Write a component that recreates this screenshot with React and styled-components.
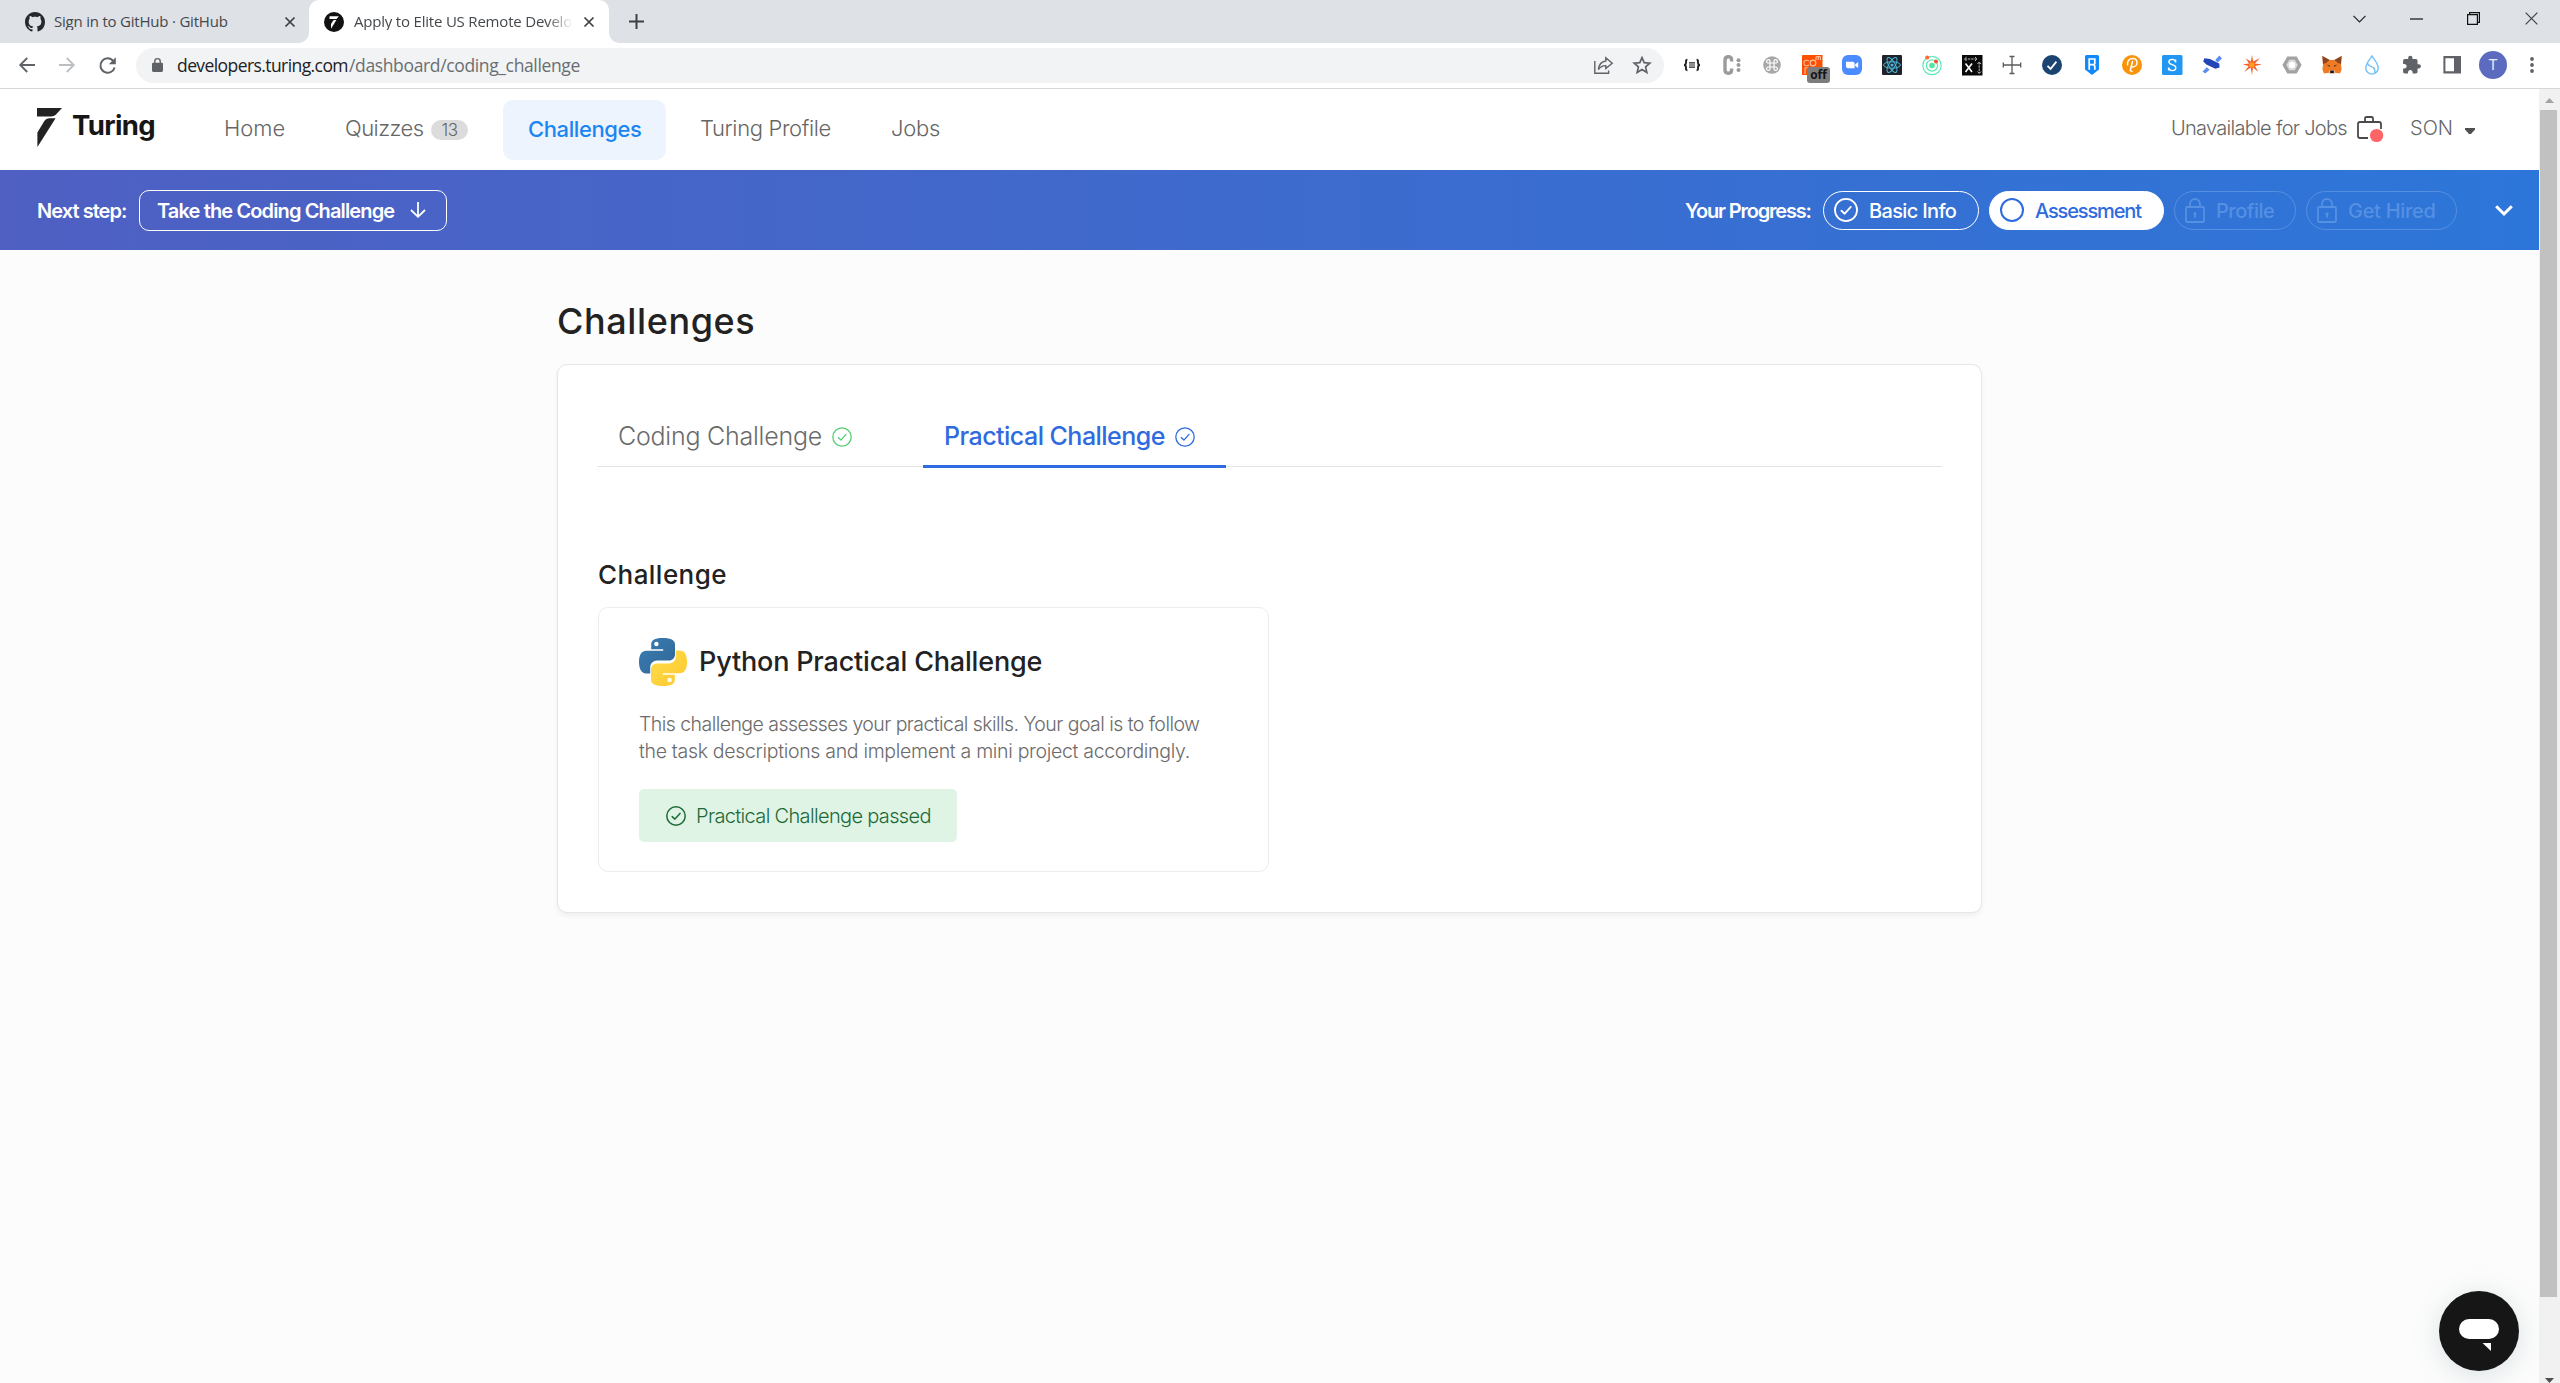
import React from "react";
import styled, { createGlobalStyle, css } from "styled-components";

const GlobalStyle = createGlobalStyle`
  *, *::before, *::after { box-sizing: border-box; }
  html, body { margin: 0; padding: 0; }
  body { font-family: Inter, "Liberation Sans", sans-serif; background: #fcfcfc; overflow: hidden; }
`;

/* ---------- shared ---------- */

const Window = styled.div`
  display: flex;
  flex-direction: column;
  width: 2560px;
  height: 1383px;
  overflow: hidden;
`;

const Label = styled.span`
  flex: none;
  display: block;
  width: ${(p) => (p.$w ? `${p.$w}px` : "auto")};
  margin: ${(p) => p.$mt || 0}px 0 0 ${(p) => p.$ml || 0}px;
  font-size: ${(p) => p.$size}px;
  font-weight: ${(p) => p.$weight || 400};
  letter-spacing: ${(p) => p.$ls || 0}px;
  line-height: 1.2;
  color: ${(p) => p.$color || "inherit"};
  white-space: nowrap;
`;

const ChromeLabel = styled(Label)`
  font-family: "Open Sans", "Noto Sans", sans-serif;
`;

const Icon = styled.svg`
  flex: none;
  display: block;
  width: ${(p) => p.$w}px;
  height: ${(p) => p.$h || p.$w}px;
  margin: ${(p) => p.$mt || 0}px 0 0 ${(p) => p.$ml || 0}px;
  overflow: visible;
`;

const Spacer = styled.div`
  flex: 1;
`;

/* ---------- browser chrome ---------- */

const TabStrip = styled.div`
  flex: none;
  display: flex;
  height: 43px;
  background: #dee1e6;
`;

const Tab = styled.div`
  position: relative;
  display: flex;
  align-items: center;
  height: 43px;
  ${(p) =>
    p.$active
      ? css`
          width: 300px;
          padding-left: 15px;
          background: #fff;
          border-radius: 10px 10px 0 0;
          &::before,
          &::after {
            content: "";
            position: absolute;
            bottom: 0;
            width: 10px;
            height: 10px;
          }
          &::before {
            left: -10px;
            background: radial-gradient(circle at 0 0, transparent 9.5px, #fff 10px);
          }
          &::after {
            right: -10px;
            background: radial-gradient(circle at 100% 0, transparent 9.5px, #fff 10px);
          }
        `
      : css`
          width: 309px;
          padding-left: 25px;
        `}
`;

const TabTitle = styled(ChromeLabel)`
  overflow: hidden;
  ${(p) =>
    p.$fade &&
    css`
      mask-image: linear-gradient(to right, #000 88%, transparent);
    `}
`;

const WindowControls = styled.div`
  display: flex;
  align-items: center;
  height: 37px;
  padding-right: 22px;
`;

const Toolbar = styled.div`
  flex: none;
  display: flex;
  align-items: center;
  height: 46px;
  padding: 0 20px 1px 19px;
  background: #fff;
  border-bottom: 1px solid #d5d8db;
`;

const Omnibox = styled.div`
  flex: none;
  display: flex;
  align-items: center;
  width: 1528px;
  height: 35px;
  margin-left: 20px;
  padding: 0 13px 0 16px;
  border-radius: 18px;
  background: #f1f3f4;
`;

const Extensions = styled.div`
  display: flex;
  align-items: center;
  gap: 20px;
  margin-left: 18px;
`;

const ExtSlot = styled.div`
  position: relative;
  flex: none;
  width: 20px;
  height: 20px;
`;

const OffBadge = styled.span`
  position: absolute;
  left: 5px;
  top: 12px;
  width: 23px;
  height: 16px;
  border-radius: 3px;
  background: #7d7d7d;
  color: #151515;
  font: 700 12px/16px "Open Sans", sans-serif;
  text-align: center;
`;

const Avatar = styled.div`
  flex: none;
  width: 28px;
  height: 28px;
  margin-left: 17px;
  border-radius: 50%;
  background: #5c6bc0;
  color: #e8eaf6;
  font: 400 15px/28px Roboto, sans-serif;
  text-align: center;
`;

/* ---------- page ---------- */

const Viewport = styled.div`
  display: flex;
  flex: 1;
  min-height: 0;
`;

const Page = styled.div`
  position: relative;
  display: flex;
  flex-direction: column;
  width: 2539px;
  background: #fcfcfc;
`;

const Header = styled.header`
  display: flex;
  align-items: center;
  height: 81px;
  padding: 0 64px 0 37px;
  background: #fff;
`;

const NavPill = styled.div`
  display: flex;
  align-items: center;
  width: 163px;
  height: 60px;
  margin-left: 35px;
  padding-left: 25px;
  border-radius: 10px;
  background: #edf4fe;
`;

const CountBadge = styled.span`
  width: 37px;
  height: 20px;
  margin-left: 7px;
  border-radius: 10px;
  background: #dcdcdc;
  color: #666;
  font-size: 17px;
  font-weight: 300;
  line-height: 20px;
  letter-spacing: -0.5px;
  text-align: center;
`;

const ProgressBar = styled.div`
  display: flex;
  align-items: center;
  height: 80px;
  padding: 0 26px 0 37px;
  background: linear-gradient(90deg, #4f5fc2 0%, #2d76d9 100%);
  color: #fff;
`;

const StepButton = styled.div`
  display: flex;
  align-items: center;
  width: 308px;
  height: 41px;
  margin-left: 11px;
  padding-left: 17px;
  border: 1.5px solid #fff;
  border-radius: 10px;
`;

const StepPill = styled.div`
  display: flex;
  align-items: center;
  width: ${(p) => p.$w}px;
  height: 39px;
  margin-left: 10px;
  padding-left: 10px;
  border: 1.5px solid ${(p) => (p.$state === "locked" ? "#568fe1" : "#fff")};
  border-radius: 20px;
  background: ${(p) => (p.$state === "active" ? "#fff" : "transparent")};
  color: ${(p) => (p.$state === "active" ? "#2f6be0" : p.$state === "locked" ? "#5590e2" : "#fff")};
`;

const Content = styled.main`
  display: flex;
  flex-direction: column;
  width: 1425px;
  margin: 50px 0 0 557px;
`;

const Panel = styled.section`
  width: 1425px;
  height: 549px;
  margin-top: 21px;
  padding: 58px 39px 0 39px;
  background: #fff;
  border: 1px solid #e6e6e6;
  border-radius: 10px;
  box-shadow: 0 3px 5px rgba(0, 0, 0, 0.05);
`;

const Tabs = styled.div`
  display: flex;
  height: 44px;
  border-bottom: 1px solid #e4e4e4;
`;

const ChallengeTab = styled.div`
  display: flex;
  align-items: center;
  width: ${(p) => p.$w}px;
  height: 45px;
  padding: 0 0 ${(p) => (p.$active ? 16 : 19)}px ${(p) => p.$pl}px;
  color: ${(p) => (p.$active ? "#2f6be0" : "#6b6b6b")};
  border-bottom: ${(p) => (p.$active ? "3px solid #2f6be0" : "0")};
`;

const ChallengeCard = styled.article`
  display: flex;
  flex-direction: column;
  width: 671px;
  height: 265px;
  margin: 17px 0 0 1px;
  padding: 30px 0 0 40px;
  border: 1px solid #ececec;
  border-radius: 10px;
`;

const CardHead = styled.div`
  display: flex;
  align-items: center;
  height: 48px;
`;

const PassedBadge = styled.div`
  display: flex;
  align-items: center;
  width: 318px;
  height: 53px;
  margin-top: 26px;
  padding-left: 27px;
  border-radius: 5px;
  background: #e0f4e6;
  color: #1d6a38;
`;

const ChatButton = styled.div`
  position: absolute;
  right: 20px;
  bottom: 12px;
  width: 80px;
  height: 80px;
  border-radius: 50%;
  background: #161616;
  box-shadow: 0 4px 28px rgba(80, 120, 130, 0.2);
`;

const Scrollbar = styled.div`
  display: flex;
  flex-direction: column;
  align-items: center;
  width: 21px;
  background: #f1f1f1;
`;

const Thumb = styled.div`
  width: 17px;
  height: 1187px;
  margin-top: 7px;
  margin-right: 2px;
  background: #c1c1c1;
`;

/* ---------- icons ---------- */

const Cross = ({ size, sw, ...rest }) => (
  <Icon $w={size} viewBox="0 0 10 10" {...rest}>
    <path d="M0.5 0.5L9.5 9.5M9.5 0.5L0.5 9.5" stroke="#3c4043" strokeWidth={sw} fill="none" />
  </Icon>
);

const CheckCircle = ({ size, sw = 1.3, ...rest }) => (
  <Icon $w={size} viewBox="0 0 20 20" fill="none" stroke="currentColor" strokeWidth={sw} strokeLinecap="round" strokeLinejoin="round" {...rest}>
    <circle cx="10" cy="10" r="9.2" />
    <path d="M6.2 10.6L8.9 13.1L14 7.4" />
  </Icon>
);

const Padlock = () => (
  <Icon $w={20} $h={25} viewBox="0 0 20 25" fill="none" stroke="currentColor" strokeWidth="1.8">
    <rect x="1" y="9" width="18" height="15" rx="1" />
    <path d="M5 9V6a5 5 0 0 1 10 0v3" />
    <circle cx="10" cy="15.8" r="1.6" fill="currentColor" stroke="none" />
    <path d="M10 16v3.4" />
  </Icon>
);

const GithubMark = () => (
  <Icon $w={20} viewBox="0 0 16 16">
    <path
      fill="#24292f"
      d="M8 0C3.58 0 0 3.58 0 8c0 3.54 2.29 6.53 5.47 7.59.4.07.55-.17.55-.38 0-.19-.01-.82-.01-1.49-2.01.37-2.53-.49-2.69-.94-.09-.23-.48-.94-.82-1.13-.28-.15-.68-.52-.01-.53.63-.01 1.08.58 1.23.82.72 1.21 1.87.87 2.33.66.07-.52.28-.87.51-1.07-1.78-.2-3.64-.89-3.64-3.95 0-.87.31-1.59.82-2.15-.08-.2-.36-1.02.08-2.12 0 0 .67-.21 2.2.82.64-.18 1.32-.27 2-.27s1.36.09 2 .27c1.53-1.04 2.2-.82 2.2-.82.44 1.1.16 1.92.08 2.12.51.56.82 1.27.82 2.15 0 3.07-1.87 3.75-3.65 3.95.29.25.54.73.54 1.48 0 1.07-.01 1.93-.01 2.2 0 .21.15.46.55.38A8.01 8.01 0 0 0 16 8c0-4.42-3.58-8-8-8z"
    />
  </Icon>
);

const TuringFavicon = () => (
  <Icon $w={20} viewBox="0 0 20 20">
    <circle cx="10" cy="10" r="10" fill="#111" />
    <path d="M5.5 4.2H14.8L12.6 6.9H5.5Z" fill="#fff" />
    <path d="M9.6 7.9H12.4L7 16.8V12Z" fill="#fff" />
  </Icon>
);

const TuringGlyph = () => (
  <Icon $w={25} $h={39} $mt={-4} viewBox="0 0 25 39">
    <path d="M0 0H25L19 6.6Q17 8.6 14 8.6H0Z" fill="#222" />
    <path d="M12 10.3H18.6L0.4 39V24.5L7.5 12.8Q9 10.3 12 10.3Z" fill="#222" />
  </Icon>
);

const SNAKE =
  "M23.8 0C15 0 12.2 2.6 12.2 6.5V11.2H24.2V12.8H7.2C3 12.8 0 16.2 0 24S3 35.4 7 35.4H11.2V29.6C11.2 25.6 14.2 22.6 18.2 22.6H30C33.4 22.6 36 20 36 16.6V6.5C36 2.6 32.6 0 23.8 0ZM17.4 3.8A2.2 2.2 0 1 1 17.4 8.2A2.2 2.2 0 0 1 17.4 3.8Z";

const PythonLogo = () => (
  <Icon $w={48} viewBox="0 0 48 48">
    <defs>
      <linearGradient id="pyBlue" x1="0" y1="0" x2="1" y2="1">
        <stop offset="0" stopColor="#3b7db3" />
        <stop offset="1" stopColor="#2f6697" />
      </linearGradient>
      <linearGradient id="pyYellow" x1="1" y1="1" x2="0" y2="0">
        <stop offset="0" stopColor="#ffdc4e" />
        <stop offset="1" stopColor="#fdc92c" />
      </linearGradient>
    </defs>
    <path fill="url(#pyBlue)" fillRule="evenodd" d={SNAKE} />
    <path fill="url(#pyYellow)" fillRule="evenodd" transform="rotate(180 24 24)" d={SNAKE} />
  </Icon>
);

const Glyph = ({ children }) => (
  <Icon $w={20} viewBox="0 0 20 20" fill="none">
    {children}
  </Icon>
);

const extensionIcons = [
  <Glyph key="json">
    <g stroke="#222">
      <path d="M5.4 4.8C3.6 4.8 4 6 4 7.5S3.4 10 2 10C3.4 10 4 11 4 12.5S3.6 15.2 5.4 15.2M14.6 4.8C16.4 4.8 16 6 16 7.5S16.6 10 18 10C16.6 10 16 11 16 12.5S16.4 15.2 14.6 15.2" strokeWidth="1.9" />
      <path d="M7 7.8H13M7 10H13M7 12.2H13" strokeWidth="1.2" />
    </g>
  </Glyph>,
  <Glyph key="c">
    <path d="M9.6 6.5V5C9.6 2.8 8.5 1.8 6.4 1.8C4 1.8 3 2.8 3 5V15C3 17.2 4 18.2 6.4 18.2C8.5 18.2 9.6 17.2 9.6 15V13.5" stroke="#9b9b9b" strokeWidth="3.4" />
    <g fill="#9b9b9b">
      <circle cx="16.5" cy="5.2" r="2" />
      <circle cx="16.5" cy="10" r="2" />
      <circle cx="16.5" cy="15" r="2" />
    </g>
  </Glyph>,
  <Glyph key="cmd">
    <circle cx="10" cy="10" r="8.8" fill="#a8a8a8" />
    <path d="M8 8H12V12H8ZM8 8H6.5A1.7 1.7 0 1 1 8 6.5ZM12 8V6.5A1.7 1.7 0 1 1 13.5 8ZM12 12H13.5A1.7 1.7 0 1 1 12 13.5ZM8 12V13.5A1.7 1.7 0 1 1 6.5 12Z" stroke="#fff" strokeWidth="1.2" />
  </Glyph>,
  <Glyph key="com">
    <rect width="20.5" height="20" rx="0.6" fill="#ff4f00" />
    <g stroke="#ffc4a8" strokeWidth="1.1">
      <path d="M6.8 6.2A2.8 2.8 0 1 0 6.8 9.8M3 19V13H6" />
      <circle cx="11" cy="8" r="2.9" />
      <path d="M14 5V1.5M14 2.4C15 1.2 16.2 1.2 16.2 2.4V5M16.2 2.4C17.2 1.2 18.4 1.2 18.4 2.4V5" />
    </g>
  </Glyph>,
  <Glyph key="zoom">
    <rect width="20" height="20" rx="6" fill="#4a8cff" />
    <path d="M4 6.8H10.6A2 2 0 0 1 12.6 8.8V13.2H6A2 2 0 0 1 4 11.2ZM13.2 9.2L16.2 7V13L13.2 10.9Z" fill="#fff" />
  </Glyph>,
  <Glyph key="react">
    <rect width="20" height="20" rx="1" fill="#20232a" />
    <g stroke="#4bb9dd" strokeWidth="1">
      <ellipse cx="10" cy="10" rx="8.4" ry="3.2" />
      <ellipse cx="10" cy="10" rx="8.4" ry="3.2" transform="rotate(60 10 10)" />
      <ellipse cx="10" cy="10" rx="8.4" ry="3.2" transform="rotate(120 10 10)" />
    </g>
    <circle cx="10" cy="10" r="1.6" fill="#4bb9dd" />
  </Glyph>,
  <Glyph key="orbit">
    <circle cx="10" cy="10.5" r="9.2" stroke="#5fe8c0" strokeWidth="1.2" />
    <circle cx="10" cy="10.5" r="5.6" stroke="#5fe8b0" strokeWidth="1.3" />
    <circle cx="10" cy="10.5" r="2.8" fill="#52e5a0" />
    <circle cx="5.2" cy="2.4" r="2" fill="#ff6b35" />
    <circle cx="14" cy="6.6" r="2" fill="#f4502e" />
  </Glyph>,
  <Glyph key="size">
    <rect width="20.5" height="20.5" fill="#0a0a0a" />
    <path d="M3.5 8.5L10 17M10 8.5L3.5 17" stroke="#fff" strokeWidth="1.6" />
    <path d="M2.5 4H15M4.5 2L2.5 4L4.5 6M13 2L15 4L13 6M17.2 7V18.5M15.5 9L17.2 7L19 9M15.5 16.5L17.2 18.5L19 16.5" stroke="#bbb" strokeWidth="1" strokeDasharray="2.5 0.8" />
  </Glyph>,
  <Glyph key="cross">
    <path d="M10 1V19M1 10H19M7.5 1.5H12.5M7.5 18.5H12.5M1.3 7.5V12.5M18.7 7.5V12.5" stroke="#5b5b5b" strokeWidth="1.3" />
  </Glyph>,
  <Glyph key="check">
    <circle cx="10" cy="10" r="10" fill="#1b4470" />
    <path d="M5.5 10.8L8.6 13.8L14.4 6.6" stroke="#fff" strokeWidth="1.8" />
  </Glyph>,
  <Glyph key="ronin">
    <path d="M4.4 0H15.6Q17 0 17 1.5V14.5L10 20L3 14.5V1.5Q3 0 4.4 0Z" fill="#1289f8" />
    <path d="M7.2 14.8V4H12.8V8.6L11.6 9.8L12.8 11V14.8M7.2 9.6H12" stroke="#fff" strokeWidth="1.7" />
  </Glyph>,
  <Glyph key="p">
    <circle cx="10" cy="10" r="10" fill="#f9930b" />
    <path d="M5.6 9.8C4.8 6 7.6 3.6 10.6 3.6C13.4 3.6 15 5.4 15 7.7C15 10.2 13 12 10.2 12H8.6M10.6 6.4L8.2 15.8" stroke="#fff" strokeWidth="1.5" strokeLinecap="round" />
    <circle cx="9.8" cy="16.4" r="0.9" fill="#fff" />
  </Glyph>,
  <Glyph key="s">
    <rect width="20.5" height="20" rx="1.5" fill="#2196f3" />
    <path d="M13.6 7.4V4.6M13.6 6.8C13 5 11.8 4.4 10.2 4.4C8.2 4.4 6.9 5.5 6.9 7C6.9 10.4 13.8 9 13.8 12.8C13.8 14.6 12.3 15.6 10.2 15.6C8.4 15.6 7.2 14.8 6.6 12.8M6.6 12.4V15.4" stroke="#fff" strokeWidth="1.4" />
  </Glyph>,
  <Glyph key="sat">
    <path d="M13.2 5L17.4 0.6L20 3.4L15.6 7.4ZM0.6 16.4L4.8 12.2L7.6 14.8L3.2 18.6Z" fill="#5c8df5" />
    <path d="M2.4 3.2L8 4L17.2 8.4L17.6 12.4L13.4 13.8L4.4 9.4L1.2 6.4Z" fill="#2245b8" />
  </Glyph>,
  <Glyph key="star">
    <path d="M10 0L11.2 6.6L18 3L12.8 8.6L20 9.6L13 11L16.4 17L11 12.6L10 20L8.6 12.6L2.4 17L6.6 11L0.6 9.4L7 8.6L3.8 3.4L8.8 6.6Z" fill="#f3602a" />
    <circle cx="9.8" cy="9.8" r="2.6" fill="#ff9d1e" />
  </Glyph>,
  <Glyph key="hex">
    <path d="M5.4 1.4H14.6L19.6 10L14.6 18.6H5.4L0.4 10Z" fill="#a2a2a2" />
    <path d="M7.2 4.8H12.8L15.8 10L12.8 15.2H7.2L4.2 10Z" fill="#dadada" />
    <circle cx="10" cy="10" r="3.2" fill="#fff" />
  </Glyph>,
  <Glyph key="fox">
    <path d="M0.4 1L7.6 5H12.4L19.6 1L19 10L19.6 14.5L18 18.5L13 17.8L11.6 19H8.4L7 17.8L2 18.5L0.4 14.5L1 10Z" fill="#ee7b24" />
    <path d="M0.4 1L7.6 5L4 8L1 9ZM19.6 1L12.4 5L16 8L19 9Z" fill="#8a4524" />
    <path d="M4.5 9.5L8 10.5L7.6 12ZM15.5 9.5L12 10.5L12.4 12Z" fill="#5b3320" />
    <path d="M7 15.4H13L12.8 17.8L11.6 19H8.4L7.2 17.8Z" fill="#d9c3b2" />
    <path d="M8.2 15.6H11.8V18H8.2Z" fill="#20150f" />
  </Glyph>,
  <Glyph key="drop">
    <path d="M10 1C12.6 4.8 16.2 8.6 16.2 12.9A6.2 6.2 0 0 1 3.8 12.9C3.8 8.6 7.4 4.8 10 1ZM5.6 8.4C6 11 9 11 11.4 12.6C13 13.8 13.2 15.6 12.6 18.2" stroke="#74c0f7" strokeWidth="1.4" />
  </Glyph>,
  <Glyph key="puzzle">
    <path
      transform="translate(-0.6 -0.2) scale(0.85)"
      d="M20.5 11H19V7c0-1.1-.9-2-2-2h-4V3.5C13 2.12 11.88 1 10.5 1S8 2.12 8 3.5V5H4c-1.1 0-1.99.9-1.99 2v3.8H3.5c1.49 0 2.7 1.21 2.7 2.7s-1.21 2.7-2.7 2.7H2V20c0 1.1.9 2 2 2h3.8v-1.5c0-1.49 1.21-2.7 2.7-2.7 1.49 0 2.7 1.21 2.7 2.7V22H17c1.1 0 2-.9 2-2v-4h1.5c1.38 0 2.5-1.12 2.5-2.5S21.88 11 20.5 11z"
      fill="#5f6368"
    />
  </Glyph>,
  <Glyph key="panel">
    <path d="M1.4 1H19V18.4H1.4ZM3.4 3.2V16.2H12V3.2Z" fill="#5f6368" fillRule="evenodd" />
  </Glyph>,
];

/* ---------- sections ---------- */

function BrowserChrome() {
  return (
    <>
      <TabStrip>
        <Tab>
          <GithubMark />
          <TabTitle $w={176} $ml={9} $mt={-1} $size={15} $ls={-0.21} $color="#44484c">
            Sign in to GitHub · GitHub
          </TabTitle>
          <Cross size={10} sw={1.7} $ml={55} />
        </Tab>
        <Tab $active>
          <TuringFavicon />
          <TabTitle $w={219} $ml={10} $mt={-1} $size={15} $ls={-0.2} $fade $color="#44484c">
            Apply to Elite US Remote Develo
          </TabTitle>
          <Cross size={10} sw={1.7} $ml={11} />
        </Tab>
        <Icon $w={15} $ml={20} $mt={14} viewBox="0 0 15 15" stroke="#3c4043" strokeWidth="2">
          <path d="M7.5 0V15M0 7.5H15" />
        </Icon>
        <Spacer />
        <WindowControls>
          <Icon $w={13} $h={8} viewBox="0 0 13 8" fill="none" stroke="#222" strokeWidth="1.2">
            <path d="M0.5 0.8L6.5 7L12.5 0.8" />
          </Icon>
          <Icon $w={13} $h={2} $ml={44} viewBox="0 0 13 2">
            <path d="M0 1H13" stroke="#111" strokeWidth="1.2" />
          </Icon>
          <Icon $w={13} $ml={44} viewBox="0 0 13 13" fill="none" stroke="#111" strokeWidth="1.2">
            <path d="M0.6 2.6H10.4V12.4H0.6ZM2.6 2.6V0.6H12.4V10.4H10.4" />
          </Icon>
          <Cross size={13} sw={0.9} $ml={45} />
        </WindowControls>
      </TabStrip>
      <Toolbar>
        <Icon $w={16} viewBox="0 0 16 16" fill="none" stroke="#5f6368" strokeWidth="1.8">
          <path d="M16 8H1.4M8.2 1L1.2 8L8.2 15" />
        </Icon>
        <Icon $w={16} $ml={24} viewBox="0 0 16 16" fill="none" stroke="#bcbfc2" strokeWidth="1.8">
          <path d="M0 8H14.6M7.8 1L14.8 8L7.8 15" />
        </Icon>
        <Icon $w={17} $ml={24} viewBox="0 0 17 17" fill="none">
          <path d="M14.4 4.2A7.2 7.2 0 1 0 15.6 10.4" stroke="#5f6368" strokeWidth="2" />
          <path d="M16.8 0.2V7.2H9.8Z" fill="#5f6368" />
        </Icon>
        <Omnibox>
          <Icon $w={11} $h={14} viewBox="0 0 12 15">
            <rect x="0" y="5" width="12" height="10" rx="1.4" fill="#5f6368" />
            <path d="M3 6V3.6A3 3 0 0 1 9 3.6V6" fill="none" stroke="#5f6368" strokeWidth="1.5" />
          </Icon>
          <ChromeLabel $w={172} $ml={14} $mt={1} $size={17.5} $ls={-0.58} $color="#202124">
            developers.turing.com
          </ChromeLabel>
          <ChromeLabel $size={17.5} $ls={-0.36} $mt={1} $color="#6a6e73">
            /dashboard/coding_challenge
          </ChromeLabel>
          <Spacer />
          <Icon $w={19} $h={17} viewBox="0 0 19 17" fill="none" stroke="#5f6368" strokeWidth="1.4">
            <path d="M0.8 4V16.2H14.6V13.4" />
            <path d="M11.8 0.8L18.2 6.2L11.8 11.6V8.6C8.4 8.6 6.2 9.8 4.4 12.6C4.8 8.4 7.4 4.6 11.8 4Z" />
          </Icon>
          <Icon $w={18} $ml={20} viewBox="0 0 18 18" fill="none" stroke="#5f6368" strokeWidth="1.7">
            <path d="M9 1.6L11.2 6.7L16.8 7.2L12.6 10.9L13.8 16.4L9 13.5L4.2 16.4L5.4 10.9L1.2 7.2L6.8 6.7Z" />
          </Icon>
        </Omnibox>
        <Extensions>
          {extensionIcons.map((icon) => (
            <ExtSlot key={icon.key}>
              {icon}
              {icon.key === "com" && <OffBadge>off</OffBadge>}
            </ExtSlot>
          ))}
        </Extensions>
        <Avatar>T</Avatar>
        <Icon $w={4} $h={16} $ml={23} viewBox="0 0 4 16" fill="#5f6368">
          <circle cx="2" cy="2" r="1.9" />
          <circle cx="2" cy="8" r="1.9" />
          <circle cx="2" cy="14" r="1.9" />
        </Icon>
      </Toolbar>
    </>
  );
}

function SiteHeader() {
  return (
    <Header>
      <TuringGlyph />
      <Label $w={82} $ml={10} $mt={-9} $size={27.5} $weight={700} $ls={-0.65} $color="#161616">
        Turing
      </Label>
      <Label $w={62} $ml={70} $mt={-2} $size={22} $weight={300} $ls={0} $color="#666">
        Home
      </Label>
      <Label $w={79} $ml={59} $mt={-2} $size={22} $weight={300} $ls={-0.55} $color="#666">
        Quizzes
      </Label>
      <CountBadge>13</CountBadge>
      <NavPill>
        <Label $w={115} $size={22} $weight={500} $ls={-0.4} $color="#1b86f2">
          Challenges
        </Label>
      </NavPill>
      <Label $w={131} $ml={34} $mt={-2} $size={22} $weight={300} $ls={-0.36} $color="#666">
        Turing Profile
      </Label>
      <Label $w={49} $ml={60} $mt={-2} $size={22} $weight={300} $ls={-0.28} $color="#666">
        Jobs
      </Label>
      <Spacer />
      <Label $w={177} $mt={-3} $size={20} $weight={300} $ls={-0.7} $color="#666">
        Unavailable for Jobs
      </Label>
      <Icon $w={26} $h={26} $ml={9} $mt={-1} viewBox="0 0 26 26" fill="none">
        <path d="M11 22H3Q1 22 1 20V8Q1 6 3 6H22Q24 6 24 8V13M8 6V2.5Q8 1 9.5 1H14.5Q16 1 16 2.5V6" stroke="#4a4a4a" strokeWidth="1.8" />
        <circle cx="19.6" cy="19.5" r="6.6" fill="#ff6467" />
      </Icon>
      <Label $w={43} $ml={27} $mt={-4} $size={20} $weight={300} $color="#666">
        SON
      </Label>
      <Icon $w={10} $h={6} $ml={12} $mt={3} viewBox="0 0 10 6">
        <path d="M0 0H10V1.5L6 6H4L0 1.5Z" fill="#4f4f4f" />
      </Icon>
    </Header>
  );
}

function StepsBar() {
  return (
    <ProgressBar>
      <Label $w={91} $mt={1} $size={20} $weight={600} $ls={-0.95}>
        Next step:
      </Label>
      <StepButton>
        <Label $w={239} $mt={1} $size={20} $weight={600} $ls={-0.87}>
          Take the Coding Challenge
        </Label>
        <Icon $w={16} $ml={14} viewBox="0 0 16 16" fill="none" stroke="#fff" strokeWidth="1.8">
          <path d="M8 0V14.6M1 8L8 14.8L15 8" />
        </Icon>
      </StepButton>
      <Spacer />
      <Label $w={128} $mt={1} $ml={-1} $size={20} $weight={600} $ls={-1.2}>
        Your Progress:
      </Label>
      <StepPill $w={156}>
        <CheckCircle size={24} sw={1.5} />
        <Label $ml={11} $mt={1} $size={20} $weight={500} $ls={-0.65}>
          Basic Info
        </Label>
      </StepPill>
      <StepPill $w={175} $state="active">
        <Icon $w={24} viewBox="0 0 24 24" fill="none" stroke="currentColor" strokeWidth="2">
          <circle cx="12" cy="12" r="11" />
        </Icon>
        <Label $ml={11} $mt={1} $size={20} $weight={500} $ls={-1.15}>
          Assessment
        </Label>
      </StepPill>
      <StepPill $w={122} $state="locked">
        <Padlock />
        <Label $ml={11} $mt={1} $size={20} $weight={500} $ls={-0.5}>
          Profile
        </Label>
      </StepPill>
      <StepPill $w={151} $state="locked">
        <Padlock />
        <Label $ml={11} $mt={1} $size={20} $weight={500} $ls={-0.3}>
          Get Hired
        </Label>
      </StepPill>
      <Icon $w={18} $h={11} $ml={38} $mt={1} viewBox="0 0 18 11" fill="none" stroke="#fff" strokeWidth="3">
        <path d="M1.2 1.2L9 9L16.8 1.2" />
      </Icon>
    </ProgressBar>
  );
}

function Challenges() {
  return (
    <Content>
      <Label $size={36} $weight={500} $ls={0.6} $color="#222">
        Challenges
      </Label>
      <Panel>
        <Tabs>
          <ChallengeTab $w={326} $pl={21}>
            <Label $w={204} $size={25} $weight={300} $ls={-0.24}>
              Coding Challenge
            </Label>
            <CheckCircle size={20} $ml={10} $mt={1} color="#56cd75" />
          </ChallengeTab>
          <ChallengeTab $w={303} $pl={21} $active>
            <Label $w={221} $size={25} $weight={500} $ls={-0.53}>
              Practical Challenge
            </Label>
            <CheckCircle size={20} $ml={10} $mt={1} />
          </ChallengeTab>
        </Tabs>
        <Label $size={26} $weight={500} $ls={0.46} $mt={92} $ml={1} $color="#222">
          Challenge
        </Label>
        <ChallengeCard>
          <CardHead>
            <PythonLogo />
            <Label $ml={12} $mt={-1} $size={27} $weight={500} $ls={-0.18} $color="#222">
              Python Practical Challenge
            </Label>
          </CardHead>
          <Label $mt={27} $size={19.5} $weight={300} $ls={-0.55} $color="#6b6b6b">
            This challenge assesses your practical skills. Your goal is to follow
          </Label>
          <Label $mt={3} $size={19.5} $weight={300} $ls={-0.31} $color="#6b6b6b">
            the task descriptions and implement a mini project accordingly.
          </Label>
          <PassedBadge>
            <CheckCircle size={20} sw={1.5} />
            <Label $ml={10} $mt={1} $size={20} $weight={300} $ls={-0.66}>
              Practical Challenge passed
            </Label>
          </PassedBadge>
        </ChallengeCard>
      </Panel>
    </Content>
  );
}

export default function App() {
  return (
    <Window>
      <GlobalStyle />
      <BrowserChrome />
      <Viewport>
        <Page>
          <SiteHeader />
          <StepsBar />
          <Challenges />
          <ChatButton>
            <Icon $w={80} viewBox="0 0 80 80">
              <rect x="20" y="28" width="40" height="20" rx="10" fill="#fff" />
              <path d="M43.5 52H52V60Z" fill="#fff" />
            </Icon>
          </ChatButton>
        </Page>
        <Scrollbar>
          <Icon $w={9} $h={5} $mt={9} viewBox="0 0 9 5">
            <path d="M4.5 0L9 5H0Z" fill="#a3a3a3" />
          </Icon>
          <Thumb />
          <Spacer />
          <Icon $w={9} $h={5} viewBox="0 0 9 5">
            <path d="M0 0H9L4.5 5Z" fill="#505050" />
          </Icon>
        </Scrollbar>
      </Viewport>
    </Window>
  );
}
